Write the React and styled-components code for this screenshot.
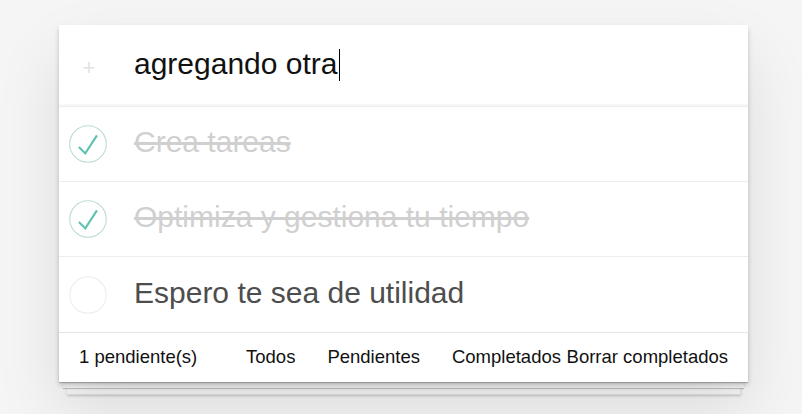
import React from "react";
import styled, { createGlobalStyle } from "styled-components";

const GlobalStyle = createGlobalStyle`
	* { box-sizing: border-box; }
	body {
		margin: 0;
		background: #f5f5f5;
		font-family: "Liberation Sans", Arial, sans-serif;
		color: #4d4d4d;
		-webkit-font-smoothing: antialiased;
	}
`;

const Page = styled.div`
	padding: 25px 0 40px 59px;
`;

const TodoApp = styled.section`
	width: 689px;
	background: #fff;
	position: relative;
	box-shadow: 0 2.5px 5px rgba(0, 0, 0, 0.2), 0 31px 62px rgba(0, 0, 0, 0.1);
`;

const Header = styled.header`
	display: flex;
	align-items: center;
	height: 82px;
	border-bottom: 1px solid #ededed;
	box-shadow: inset 0 -2px 1px rgba(0, 0, 0, 0.03);
`;

const PlusSign = styled.span`
	width: 60px;
	text-align: center;
	font-size: 22px;
	line-height: 1;
	color: #e3e3e3;
	margin-top: 4px;
`;

const NewTodo = styled.div`
	margin: 0 0 4px 15px;
	display: flex;
	align-items: center;
	font-size: 30px;
	line-height: 42px;
	color: #111;
`;

const Caret = styled.span`
	display: inline-block;
	width: 1.5px;
	height: 32px;
	margin: 2px 0 0 1px;
	background: #000;
`;

const List = styled.ul`
	margin: 0;
	padding: 0;
	list-style: none;
`;

const Item = styled.li`
	display: flex;
	align-items: center;
	height: 75px;
	border-bottom: 1px solid #ededed;
	&:last-child {
		border-bottom: none;
	}
`;

const Toggle = styled.svg`
	flex: none;
	width: 38px;
	height: 38px;
	margin: 0 27px 0 10px;
`;

const Label = styled.label`
	margin-bottom: 4px;
	font-size: 30px;
	line-height: 36px;
	color: ${({ done }) => (done ? "#d0d0d0" : "#4d4d4d")};
	text-decoration: ${({ done }) => (done ? "line-through" : "none")};
	white-space: nowrap;
`;

const Footer = styled.footer`
	position: relative;
	display: grid;
	grid-template-columns: 1fr auto 1fr;
	align-items: center;
	height: 50px;
	padding: 0 20px 2px;
	border-top: 1px solid #e6e6e6;
	font-size: 18.5px;
	color: #111;
	&::before {
		content: "";
		position: absolute;
		left: 0;
		right: 0;
		bottom: 0;
		height: 50px;
		z-index: -1;
		box-shadow: 0 1px 1px rgba(0, 0, 0, 0.2),
			0 10px 0 -4px #f6f6f6,
			0 11px 1px -4px rgba(0, 0, 0, 0.2),
			0 20px 0 -7.5px #f6f6f6,
			0 21px 2.5px -7.5px rgba(0, 0, 0, 0.2);
	}
`;

const Count = styled.span`
	justify-self: start;
`;

const Filters = styled.ul`
	display: flex;
	gap: 32px;
	margin: 0;
	padding: 0;
	list-style: none;
`;

const FilterLink = styled.a`
	color: inherit;
	text-decoration: none;
	cursor: pointer;
`;

const ClearButton = styled.button`
	justify-self: end;
	border: 0;
	padding: 0;
	background: none;
	font: inherit;
	color: inherit;
	cursor: pointer;
`;

function Check({ done }) {
	return (
		<Toggle viewBox="-2 -2 104 104">
			<circle
				cx="50"
				cy="50"
				r="50"
				fill="none"
				stroke={done ? "#bddad5" : "#ededed"}
				strokeWidth="3"
			/>
			{done && <path fill="#5dc2af" d="M72 25L42 71 27 56l-4 4 20 20 34-52z" />}
		</Toggle>
	);
}

const todos = [
	{ id: 1, title: "Crea tareas", done: true },
	{ id: 2, title: "Optimiza y gestiona tu tiempo", done: true },
	{ id: 3, title: "Espero te sea de utilidad", done: false }
];

export default function App() {
	const pending = todos.filter((t) => !t.done).length;
	return (
		<>
			<GlobalStyle />
			<Page>
				<TodoApp>
					<Header>
						<PlusSign>+</PlusSign>
						<NewTodo>
							agregando otra
							<Caret />
						</NewTodo>
					</Header>
					<List>
						{todos.map((t) => (
							<Item key={t.id}>
								<Check done={t.done} />
								<Label done={t.done}>{t.title}</Label>
							</Item>
						))}
					</List>
					<Footer>
						<Count>{pending} pendiente(s)</Count>
						<Filters>
							<li><FilterLink>Todos</FilterLink></li>
							<li><FilterLink>Pendientes</FilterLink></li>
							<li><FilterLink>Completados</FilterLink></li>
						</Filters>
						<ClearButton>Borrar completados</ClearButton>
					</Footer>
				</TodoApp>
			</Page>
		</>
	);
}
